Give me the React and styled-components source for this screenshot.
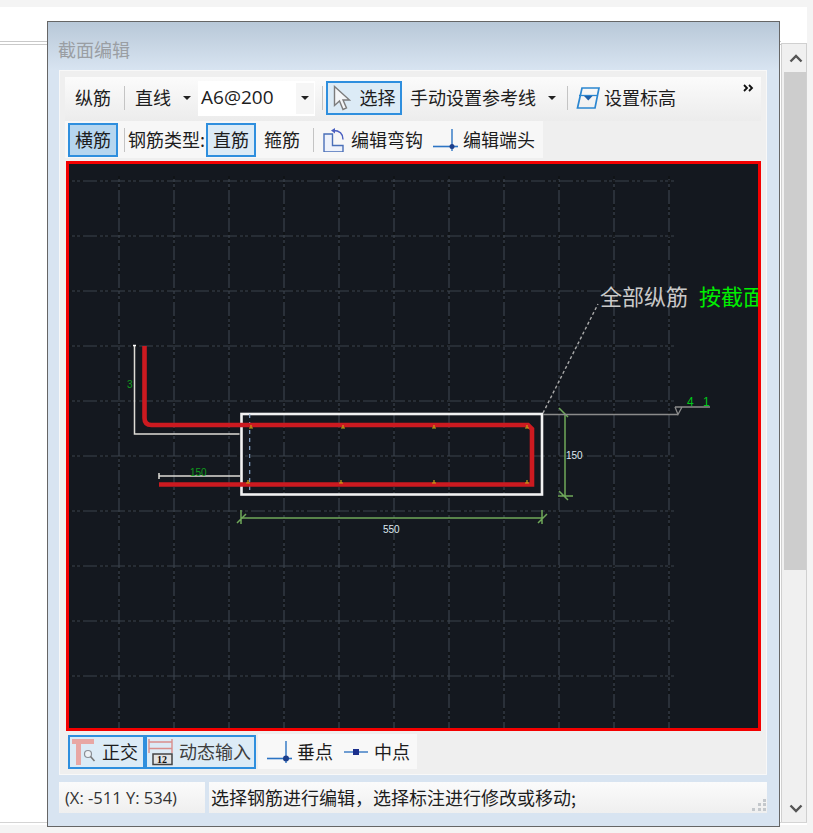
import styled, { createGlobalStyle } from 'styled-components';

const GlobalStyle = createGlobalStyle`
  html, body {
    margin: 0;
    padding: 0;
    background: #f4f4f4;
  }
  body {
    font-family: "Noto Sans CJK SC", "Liberation Sans", sans-serif;
  }
`;

const GRID_X = [119, 174, 229, 284, 339, 394, 449, 504, 559, 614, 669];
const GRID_Y = [181, 236, 291, 346, 401, 456, 511, 566, 621, 676];
const BAR_DOTS = [
  [251, 427], [343, 427], [434, 427], [527, 427],
  [248, 482], [341, 482], [434, 482], [527, 482],
];

const Caret = () => (
  <CaretIcon viewBox="0 0 8 4">
    <path d="M0 0h8L4 4z" fill="#222" />
  </CaretIcon>
);

const CursorIcon = () => (
  <svg width="18" height="27" viewBox="0 0 18 27">
    <path d="M1.500 1.500v19l5-4.500 3.500 8.500 3.500-1.500-3.500-8h6.500z" fill="#f4f6f8" stroke="#7c7c7c" strokeWidth="1.400" />
  </svg>
);

const LevelIcon = () => (
  <svg width="24" height="22" viewBox="0 0 24 22">
    <path d="M6 1h17l-4 20H1.500z" fill="none" stroke="#2b86d0" strokeWidth="1.700" />
    <path d="M3 8.500h18" stroke="#2b86d0" strokeWidth="1.300" />
    <path d="M8 9h8.500l-4.200 4.500z" fill="#1f5fa8" />
  </svg>
);

const HookIcon = () => (
  <svg width="24" height="24" viewBox="0 0 24 24">
    <path d="M1 6h8.500v11.500H20V24H1z" fill="#eef2fb" stroke="#4a6fb8" strokeWidth="1.400" />
    <path d="M10 2.500c6 0 10 2 10 9" fill="none" stroke="#4a5fc0" strokeWidth="1.400" />
    <path d="M12 0v5.500L8 2.500z" fill="#4a5fc0" />
  </svg>
);

const EndIcon = ({ big }) => (
  <svg width="26" height="24" viewBox="0 0 26 24">
    <path d="M0 18.500h25" stroke="#2c74c4" strokeWidth="1.600" />
    <path d="M19 1v22" stroke="#2c74c4" strokeWidth="1.400" />
    <circle cx="19" cy="18.500" r={big ? 3 : 2.500} fill="#1c3f8c" />
  </svg>
);

const MidIcon = () => (
  <svg width="24" height="10" viewBox="0 0 24 10">
    <path d="M0 5h24" stroke="#4d86c8" strokeWidth="1.600" />
    <rect x="9" y="2" width="6" height="6" fill="#1b2f8c" />
  </svg>
);

const OrthoIcon = () => (
  <svg width="26" height="27" viewBox="0 0 26 27">
    <path d="M0 1h22v5H9v21H4V6H0z" fill="#e8a7a4" />
    <circle cx="16" cy="16" r="3.500" fill="#eef2f6" stroke="#8a8f96" strokeWidth="1.200" />
    <path d="M18.500 18.500l4 4.500" stroke="#777" strokeWidth="1.600" />
  </svg>
);

const InputIcon = () => (
  <svg width="26" height="28" viewBox="0 0 26 28">
    <path d="M1 1v14M24 1v14M1 4h23M1 10.500h23" fill="none" stroke="#d98f8c" strokeWidth="1.400" />
    <path d="M5 16h19v10.500H5z" fill="#e4e4e4" stroke="#444" strokeWidth="1.500" />
    <text x="9" y="25" fontSize="10" fontWeight="700" fontFamily="Liberation Serif, serif" fill="#111">12</text>
  </svg>
);

const SectionDrawing = () => (
  <DrawingSvg viewBox="69 164 689 564">
    {GRID_X.map((x) => (
      <g key={x}>
        <GridLine x1={x} y1="176" x2={x} y2="728" />
        <GridGap x1={x} y1="176" x2={x} y2="728" />
      </g>
    ))}
    {GRID_Y.map((y) => (
      <g key={y}>
        <GridLine x1="69" y1={y} x2="674" y2={y} />
        <GridGap x1="69" y1={y} x2="674" y2={y} />
      </g>
    ))}

    {/* section outline */}
    <rect x="241.500" y="414" width="300.500" height="80.500" fill="none" stroke="#f2f2f2" strokeWidth="2.600" />
    <path d="M249.700 414v80" stroke="#8fb0d6" strokeWidth="1.100" strokeDasharray="4 4" />

    {/* rebar shape dimensions */}
    <path d="M134.500 346v88h105" fill="none" stroke="#dedcd6" strokeWidth="1.500" />
    <path d="M159 476h81M159 473v6" fill="none" stroke="#dedcd6" strokeWidth="1.500" />
    <path d="M133 345.500h3" stroke="#fff" strokeWidth="1.500" />
    <DimLabel x="190" y="476" fill="#0f9a1c">150</DimLabel>
    <DimLabel x="127" y="388" fill="#0f9a1c">3</DimLabel>

    {/* rebar */}
    <path
      d="M144.500 346v72q0 7 7 7H528l4 4v55.500H159"
      fill="none"
      stroke="#cc1a20"
      strokeWidth="4.600"
    />
    {BAR_DOTS.map(([x, y]) => (
      <path key={`${x}-${y}`} d={`M${x - 2} ${y + 1}h4M${x} ${y - 2}v3`} stroke="#c9a415" strokeWidth="1.200" />
    ))}

    {/* dimensions */}
    <g stroke="#6fa85a" strokeWidth="1.500" fill="none">
      <path d="M242 518h301" />
      <path d="M241 510v14M237 523l9-9M542 510v14M538 523l9-9" />
      <path d="M565 415v81" />
      <path d="M558 496h15M559 408l9 9M559 491l9 9" />
    </g>
    <DimLabel x="383" y="533" fill="#dfe8f0">550</DimLabel>
    <DimLabel x="566" y="459" fill="#dfe8f0">150</DimLabel>

    {/* leader */}
    <path d="M543 413L598 304" stroke="#a9a9a9" strokeWidth="1.400" strokeDasharray="3 2.500" />
    <path d="M543 414.500h135M675 407h35M675 407l3 7.500 4-7.500" fill="none" stroke="#8b8b8b" strokeWidth="1.300" />
    <LeaderText x="600" y="305" fill="#c9c9c9">全部纵筋</LeaderText>
    <LeaderText x="699" y="305" fill="#00f000">按截面</LeaderText>
    <DimLabel x="687" y="406" fill="#00c81a" $big>4</DimLabel>
    <DimLabel x="703" y="406" fill="#00c81a" $big>1</DimLabel>
  </DrawingSvg>
);

const App = () => {
  return (
    <>
      <GlobalStyle />
      <Backdrop>
        <Sheet>
          <SheetTop />
          <SheetBody>
            <SheetContent />
            <ScrollBar>
              <ScrollArrow>
                <svg width="14" height="9" viewBox="0 0 14 9">
                  <path d="M1.500 7.500L7 2l5.500 5.500" fill="none" stroke="#555" strokeWidth="2.400" />
                </svg>
              </ScrollArrow>
              <ScrollTrack>
                <ScrollThumb />
              </ScrollTrack>
              <ScrollArrow>
                <svg width="14" height="9" viewBox="0 0 14 9">
                  <path d="M1.500 1.500L7 7l5.500-5.500" fill="none" stroke="#555" strokeWidth="2.400" />
                </svg>
              </ScrollArrow>
            </ScrollBar>
          </SheetBody>
        </Sheet>

        <Dialog>
          <TitleBar>截面编辑</TitleBar>
          <Panel>
            <TopBar>
              <Label $ml={10}>纵筋</Label>
              <Separator $ml={13} />
              <Label $ml={10}>直线</Label>
              <CaretSlot $ml={12}><Caret /></CaretSlot>
              <ComboBox>
                <ComboText>A6@200</ComboText>
                <ComboArrow><Caret /></ComboArrow>
              </ComboBox>
              <Separator $ml={7} />
              <ToolButton $active $ml={3} $w={76}>
                <CursorIcon />
                <Label $ml={9}>选择</Label>
              </ToolButton>
              <Label $ml={8}>手动设置参考线</Label>
              <CaretSlot $ml={12}><Caret /></CaretSlot>
              <Separator $ml={11} />
              <IconSlot $ml={8}><LevelIcon /></IconSlot>
              <Label $ml={4}>设置标高</Label>
              <Overflow>
                <svg width="11" height="8" viewBox="0 0 11 8">
                  <path d="M1 1l3 3-3 3M6 1l3 3-3 3" fill="none" stroke="#111" strokeWidth="1.800" />
                </svg>
              </Overflow>
            </TopBar>
            <SecondBar>
              <ToolButton $active $strong $ml={3} $w={50}>
                <Label>横筋</Label>
              </ToolButton>
              <Separator $ml={6} />
              <Label $ml={3}>钢筋类型:</Label>
              <ToolButton $active $ml={1} $w={50}>
                <Label>直筋</Label>
              </ToolButton>
              <Label $ml={8}>箍筋</Label>
              <Separator $ml={13} />
              <IconSlot $ml={9}><HookIcon /></IconSlot>
              <Label $ml={4}>编辑弯钩</Label>
              <IconSlot $ml={10}><EndIcon /></IconSlot>
              <Label $ml={4}>编辑端头</Label>
            </SecondBar>
            <Canvas>
              <SectionDrawing />
            </Canvas>
            <BottomBar>
              <ToolButton $active $ml={3} $w={77} $pl={2}>
                <OrthoIcon />
                <Label $ml={4}>正交</Label>
              </ToolButton>
              <ToolButton $active $w={111} $pl={1}>
                <InputIcon />
                <Label $ml={5} $muted>动态输入</Label>
              </ToolButton>
              <SnapGroup>
                <EndIcon big />
                <Label $ml={4}>垂点</Label>
                <IconSlot $ml={11}><MidIcon /></IconSlot>
                <Label $ml={6}>中点</Label>
              </SnapGroup>
            </BottomBar>
          </Panel>
          <StatusBar>
            <CoordCell>(X: -511 Y: 534)</CoordCell>
            <MessageCell>
              选择钢筋进行编辑，选择标注进行修改或移动;
              <Grip>
                <svg width="16" height="16" viewBox="0 0 16 16">
                  <path d="M12 2h3v3h-3zM7 6h3v3H7zM12 6h3v3h-3zM1 11h3v3H1zM7 11h3v3H7zM12 11h3v3h-3z" fill="#c4c8cc" />
                </svg>
              </Grip>
            </MessageCell>
          </StatusBar>
        </Dialog>
      </Backdrop>
    </>
  );
};

const Backdrop = styled.div`
  position: relative;
  width: 813px;
  height: 833px;
  padding: 7px 6px 0 0;
  box-sizing: border-box;
  overflow: hidden;
  background: #f4f4f4;
`;

const Sheet = styled.div`
  display: flex;
  flex-direction: column;
  height: 818px;
  background: #fff;
`;

const SheetTop = styled.div`
  height: 34px;
`;

const SheetBody = styled.div`
  display: flex;
  height: 782px;
  border-bottom: 1px solid #d4d4d4;
  box-sizing: border-box;
`;

const SheetContent = styled.div`
  flex: 1;
  height: 2px;
  border-top: 1px solid #c9c9c9;
  border-bottom: 1px solid #c9c9c9;
`;

const ScrollBar = styled.div`
  display: flex;
  flex-direction: column;
  width: 26px;
  margin-top: 2px;
  border: 1px solid #d0d0d0;
  border-bottom: 0;
  box-sizing: border-box;
  background: #f0f0f0;
`;

const ScrollArrow = styled.div`
  display: flex;
  align-items: center;
  justify-content: center;
  flex: 0 0 28px;
  padding-left: 3px;
`;

const ScrollTrack = styled.div`
  flex: 1;
  padding-left: 2px;
`;

const ScrollThumb = styled.div`
  height: 498px;
  background: #cdcdcd;
`;

const Dialog = styled.div`
  position: absolute;
  left: 47px;
  top: 21px;
  display: flex;
  flex-direction: column;
  width: 733px;
  height: 806px;
  padding: 0 12px 0 11px;
  box-sizing: border-box;
  border: 1px solid #666;
  background: linear-gradient(#b8c8d8 0, #d8e4f1 48px);
`;

const TitleBar = styled.div`
  height: 48px;
  margin-left: -1px;
  padding-top: 14px;
  box-sizing: border-box;
  font-size: 18px;
  line-height: 26px;
  color: #9a9ea3;
`;

const Panel = styled.div`
  display: flex;
  flex-direction: column;
  width: 708px;
  height: 705px;
  padding: 6px 5px 0 5px;
  box-sizing: border-box;
  background: #efefef;
  border: 1px solid #f8f8f8;
`;

const TopBar = styled.div`
  display: flex;
  align-items: center;
  height: 44px;
  padding-bottom: 2px;
  box-sizing: border-box;
  flex: none;
  background: linear-gradient(#fbfbfb, #ececec);
`;

const SecondBar = styled.div`
  display: flex;
  align-items: center;
  width: 478px;
  height: 37px;
  flex: none;
  background: #f7f7f7;
`;

const BottomBar = styled.div`
  display: flex;
  align-items: center;
  height: 35px;
  margin-top: 3px;
  flex: none;
`;

const Label = styled.span`
  flex: none;
  margin: -2px 0 0 ${(p) => p.$ml || 0}px;
  font-size: 18px;
  line-height: 24px;
  white-space: nowrap;
  color: ${(p) => (p.$muted ? '#3d3d3d' : '#1d1d1d')};
`;

const Separator = styled.div`
  flex: none;
  width: 1px;
  height: 24px;
  margin-left: ${(p) => p.$ml || 0}px;
  background: #c4c4c4;
`;

const CaretSlot = styled.span`
  display: flex;
  flex: none;
  margin-left: ${(p) => p.$ml || 0}px;
`;

const CaretIcon = styled.svg`
  width: 8px;
  height: 4px;
`;

const IconSlot = styled.span`
  display: flex;
  flex: none;
  margin-left: ${(p) => p.$ml || 0}px;
`;

const ComboBox = styled.div`
  display: flex;
  align-items: center;
  justify-content: space-between;
  flex: none;
  width: 117px;
  height: 35px;
  margin-left: 7px;
  padding-left: 3px;
  box-sizing: border-box;
  background: #fff;
`;

const ComboText = styled.span`
  margin-top: -2px;
  font-family: "Open Sans", "Liberation Sans", sans-serif;
  font-size: 19px;
  color: #1d1d1d;
`;

const ComboArrow = styled.span`
  display: flex;
  align-items: center;
  justify-content: center;
  width: 18px;
  height: 31px;
  margin-right: 1px;
  background: #f6f6f6;
`;

const ToolButton = styled.div`
  display: flex;
  align-items: center;
  justify-content: ${(p) => (p.$pl === undefined ? 'center' : 'flex-start')};
  flex: none;
  width: ${(p) => p.$w}px;
  height: 34px;
  margin-left: ${(p) => p.$ml || 0}px;
  padding-left: ${(p) => p.$pl || 0}px;
  box-sizing: border-box;
  border: 2px solid #2f8fde;
  background: ${(p) => (p.$strong ? '#b6d6ef' : '#dcebf6')};
`;

const Overflow = styled.span`
  display: flex;
  align-self: flex-start;
  margin: 7px 7px 0 auto;
`;

const Canvas = styled.div`
  flex: none;
  width: 695px;
  height: 570px;
  margin: 3px 0 0 1px;
  box-sizing: border-box;
  border: 3px solid #f40000;
  background: #14181f;
`;

const DrawingSvg = styled.svg`
  display: block;
  width: 689px;
  height: 564px;
`;

const GridLine = styled.line`
  stroke: #3a424c;
  stroke-width: 1.200;
`;

const GridGap = styled.line`
  stroke: #000;
  stroke-width: 1.200;
  stroke-dasharray: 3 3 2 3 3 14;
`;

const DimLabel = styled.text`
  font-family: "Liberation Sans", sans-serif;
  font-size: ${(p) => (p.$big ? 12 : 10)}px;
`;

const LeaderText = styled.text`
  font-size: 22px;
`;

const SnapGroup = styled.div`
  display: flex;
  align-items: center;
  width: 159px;
  height: 35px;
  margin-left: 2px;
  padding-left: 9px;
  box-sizing: border-box;
  background: #f8f8f8;
`;

const StatusBar = styled.div`
  display: flex;
  gap: 4px;
  width: 708px;
  height: 31px;
  margin-top: 7px;
`;

const CoordCell = styled.div`
  flex: 0 0 146px;
  padding-left: 6px;
  box-sizing: border-box;
  font-family: "Open Sans", "Liberation Sans", sans-serif;
  font-size: 16.500px;
  line-height: 31px;
  white-space: nowrap;
  color: #333;
  background: linear-gradient(#fbfbfb, #efefef);
`;

const MessageCell = styled.div`
  position: relative;
  flex: 1;
  padding-left: 2px;
  font-size: 18px;
  line-height: 30px;
  white-space: nowrap;
  color: #1d1d1d;
  background: linear-gradient(#fbfbfb, #efefef);
`;

const Grip = styled.span`
  position: absolute;
  right: 0;
  bottom: 0;
  display: flex;
`;

export default App;
